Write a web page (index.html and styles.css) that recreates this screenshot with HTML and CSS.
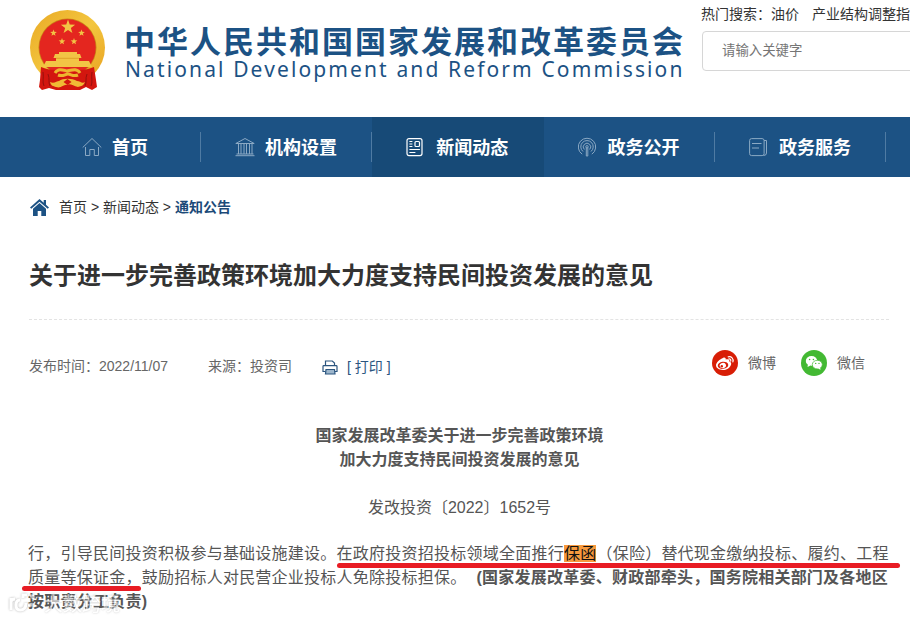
FILE: index.html
```html
<!DOCTYPE html>
<html lang="zh-CN">

<head>
  <meta charset="UTF-8">
  <title>关于进一步完善政策环境加大力度支持民间投资发展的意见</title>
  <link rel="stylesheet" href="styles.css">
</head>

<body>
  <div class="page">
    <header class="header">
      <svg class="emblem" viewBox="0 0 76 82">
        <defs>
          <linearGradient id="gold" x1="0" y1="0" x2="1" y2="1">
            <stop offset="0" stop-color="#e9a925"/>
            <stop offset=".5" stop-color="#f3c63f"/>
            <stop offset="1" stop-color="#e8a01f"/>
          </linearGradient>
          <path id="star" d="M0-1 .235-.323.951-.309.38.124.588.809 0 .4-.588.809-.38.124-.951-.309-.235-.323z"/>
        </defs>
        <circle cx="37.500" cy="37.500" r="37.500" fill="url(#gold)"/>
        <circle cx="37.500" cy="37.500" r="29" fill="#c98417"/>
        <circle cx="37.500" cy="37.500" r="28.200" fill="#e4261f"/>
        <g fill="#f2c545">
          <use href="#star" transform="translate(38 17) scale(7.500)"/>
          <use href="#star" transform="translate(23.500 23) scale(3.500)"/>
          <use href="#star" transform="translate(51.500 23) scale(3.500)"/>
          <use href="#star" transform="translate(32 31.500) scale(3.500)"/>
          <use href="#star" transform="translate(44 31.500) scale(3.500)"/>
          <path d="M29 42h18v2h3l1.500 4H49v3h10l3 6H13l3-6h10v-3h-2.500l1.500-4h4z"/>
        </g>
        <path d="M26 48.300h23" stroke="#d8951d" stroke-width=".7"/>
        <path d="M11 57c5 2 9 3 15 3l11.500 4L49 60c6 0 10-1 15-3l2 13 1 7-5 3-6-3-6 3H26l-7-2-7 2-3-3 1-7z" fill="#d3160f"/>
        <path d="M13 62c1 6-1 10 1 14M18 64c2 5 0 8 2 12M57 64c-2 5 0 8-2 12M62 62c-1 6 1 10-1 14" fill="none" stroke="#96100c"/>
        <path d="M25 63c3-5 8-3 12-2 5-1 10-3 13 2M28 65c5 2 7-1 10-1s5 3 10 1" fill="none" stroke="#edb52e" stroke-width="3"/>
        <path d="M20 72c4 2 7-1 9-1 4-3 13-3 18 0 3 0 5 3 8 1-2 5-5 4-7 5-5-1-8-4-11-2-3-1-6 4-11 2-3-1-5-1-6-5z" fill="#f0ba35"/>
        <path d="m37.500 69 4 3-4 3-4-3z" fill="#d3160f"/>
      </svg>
      <div class="site-name">
        <div class="name-cn">中华人民共和国国家发展和改革委员会</div>
        <div class="name-en">National Development and Reform Commission</div>
      </div>
      <div class="search">
        <div class="hot"><span>热门搜索：油价</span><span>产业结构调整指</span></div>
        <div class="search-box">请输入关键字</div>
      </div>
    </header>

    <nav class="nav">
      <a class="nav-item first">
        <svg class="nav-icon" viewBox="0 0 20 20"><path d="M.7 10.500 10 1.500l9.300 9M3.500 10v8.500h4.300v-6h4.500v6h4.200V10"/></svg>
        <span>首页</span>
      </a>
      <a class="nav-item">
        <svg class="nav-icon" viewBox="0 0 20 20"><path d="M.8 6.500 10 1.500l9.200 5zM3.500 6.500v10.500M6 6.500v10.500M9 6.500v10.500M11.500 6.500v10.500M14.500 6.500v10.500M17 6.500v10.500M1.500 17h17M.5 18.700h19"/></svg>
        <span>机构设置</span>
      </a>
      <a class="nav-item active">
        <svg class="nav-icon" viewBox="0 0 20 20"><rect x="1" y="1.600" width="15" height="17" rx="2"/><rect x="9" y="4.500" width="4.500" height="5" rx="1"/><path d="M3.400 4.500h3M3.400 7h3M3.400 9.500h3M3.400 12.500h10.500M3.400 15.500h6"/></svg>
        <span>新闻动态</span>
      </a>
      <a class="nav-item">
        <svg class="nav-icon" viewBox="0 0 20 20"><path d="M4.200 17.200A8.700 8.700 0 1 1 13.800 17.200M5 14.500A6.200 6.200 0 1 1 13 14.500M6.300 12.500A3.700 3.700 0 1 1 11.700 12.500M8.300 10.500v8.500h1.500v-8.500"/><circle cx="9" cy="9.800" r="1.200"/></svg>
        <span>政务公开</span>
      </a>
      <a class="nav-item">
        <svg class="nav-icon" viewBox="0 0 20 20"><rect x=".6" y="1.600" width="14.500" height="17" rx="2"/><path d="M15 3.500h2.500v12.500q0 2.500-3 2.500M3 6.500h9.500M3 11h7"/></svg>
        <span>政务服务</span>
      </a>
    </nav>

    <div class="crumbs">
      <svg class="home" viewBox="0 0 19 17"><path d="M9.500 0 0 8.500l1.300 1.300L9.500 2.700l8.200 7.100L19 8.500l-3-2.700V1h-2.300v2.700z"/><path d="M9.500 4 3 9.700V17h4.700v-5h3.600v5H16V9.700z"/></svg>
      <span>首页 &gt; 新闻动态 &gt; <b>通知公告</b></span>
    </div>

    <h1 class="title">关于进一步完善政策环境加大力度支持民间投资发展的意见</h1>

    <div class="meta">
      <span class="date">发布时间：2022/11/07</span>
      <span class="source">来源：投资司</span>
      <span class="print">
        <svg viewBox="0 0 16 15"><path d="M3.500 6V1h6.800L12.500 3v3M3.500 11.500H1V6.500q0-.8.800-.8h12.400q.8 0 .8.800v5H12.500"/><path class="tray" d="M4 9.500h8.500l.5 4.500H3.500z"/></svg>
        <span>[ 打印 ]</span>
      </span>
      <span class="share">
        <svg viewBox="0 0 26 26">
          <circle cx="13" cy="13" r="13" fill="#d81e06"/>
          <path d="M11 8c1.700-1 3 0 2.700 1.600 2.300-.8 4.200-.2 3.600 1.800 1.700.5 2.300 1.700 1.700 3.300-1.200 3.300-4.500 5.300-8 5.300-4 0-7-2-7-4.700C4 12.600 8 9 11 8z" fill="#fff"/>
          <ellipse cx="11" cy="15.300" rx="5.300" ry="3.600" fill="#d81e06" transform="rotate(-7 11 15.300)"/>
          <ellipse cx="10.800" cy="15.500" rx="3.200" ry="2.700" fill="#fff" transform="rotate(-20 10.800 15.500)"/>
          <circle cx="9.800" cy="16.200" r="1.200" fill="#d81e06"/>
          <path d="M16.200 6.800c3.200-.8 5.600 1.800 4.700 5M16.700 9c1.500-.3 2.400.8 2 2.200" fill="none" stroke="#fff" stroke-width="1.200" stroke-linecap="round"/>
        </svg>
        <span>微博</span>
      </span>
      <span class="share">
        <svg viewBox="0 0 26 26">
          <circle cx="13" cy="13" r="13" fill="#43b933"/>
          <ellipse cx="10.500" cy="10.900" rx="5.700" ry="4.900" fill="#fff"/>
          <path d="m7 14-.5 3 3-1.500z" fill="#fff"/>
          <ellipse cx="16.300" cy="14.600" rx="5" ry="4.300" fill="#fff" stroke="#43b933" stroke-width=".7"/>
          <path d="m17 18.500 2.500 1.300-.4-2.500z" fill="#fff"/>
          <g fill="#43b933"><circle cx="8.600" cy="9.500" r=".8"/><circle cx="12.400" cy="9.500" r=".8"/><circle cx="14.700" cy="13.400" r=".7"/><circle cx="18" cy="13.400" r=".7"/></g>
        </svg>
        <span>微信</span>
      </span>
    </div>

    <article class="article">
      <h2 class="doc-title">国家发展改革委关于进一步完善政策环境<br>加大力度支持民间投资发展的意见</h2>
      <p class="doc-no">发改投资〔2022〕1652号</p>
      <div class="body-text">
        <p class="line">行，引导民间投资积极参与基础设施建设。<span class="marked">在政府投资招投标领域全面推行<em>保函</em>（保险）替代现金缴纳投标、履约、工程</span></p>
        <p class="line"><span class="marked short">质量等保证金，</span>鼓励招标人对民营企业投标人免除投标担保。<b class="duty">(国家发展改革委、财政部牵头，国务院相关部门及各地区</b></p>
        <p class="line"><b>按职责分工负责)</b></p>
        <div class="watermark">
          <svg viewBox="0 0 28 24"><path d="M3 5v12M3 9q0-3 4-3M12 7q-4 0-4 5t4 5q6 0 6-7M15 5V2h4M22 3h3v3M23 10v2h-3"/></svg>
          <span>大数跨境</span>
        </div>
      </div>
    </article>
  </div>
</body>

</html>
```
FILE: styles.css
```css
* {
  box-sizing: border-box;
}

body {
  margin: 0;
  background: #fff;
  color: #333;
  font-family: "Liberation Sans", "Noto Sans CJK SC", sans-serif;
  font-size: 14px;
}

h1, h2, p {
  margin: 0;
}

.page {
  width: 910px;
  height: 622px;
  overflow: hidden;
}

/* header */
.header {
  display: flex;
  height: 117px;
  padding-left: 30px;
}

.emblem {
  width: 76px;
  height: 82px;
  margin-top: 10px;
  flex: none;
}

.site-name {
  width: 577px;
  margin-left: 18px;
  padding-top: 21px;
  flex: none;
  color: #1c5284;
  white-space: nowrap;
}

.name-cn {
  font-family: "Noto Sans CJK SC", sans-serif;
  font-size: 31px;
  font-weight: 700;
  line-height: 38px;
  letter-spacing: 2px;
}

.name-en {
  padding-left: 1px;
  font-family: "Noto Sans", sans-serif;
  font-size: 21px;
  line-height: 20px;
  letter-spacing: 2.12px;
}

.search {
  flex: 1;
  min-width: 0;
  overflow: hidden;
}

.hot {
  display: flex;
  gap: 13px;
  height: 31px;
  line-height: 29px;
  white-space: nowrap;
}

.search-box {
  width: 260px;
  height: 40px;
  margin-left: 1px;
  padding-left: 19px;
  border: 1px solid #d6d6d6;
  border-radius: 4px;
  color: #757575;
  font-size: 13.4px;
  line-height: 37px;
}

/* main menu */
.nav {
  display: flex;
  height: 60px;
  padding-left: 29px;
  background: #1c5284;
}

.nav-item {
  display: flex;
  align-items: center;
  gap: 10px;
  width: 171.3px;
  padding-left: 34px;
  background: linear-gradient(#4f7ba3, #4f7ba3) right center / 1px 30px no-repeat;
  color: #fff;
  font-size: 18px;
  font-weight: 700;
}

.nav-item.first {
  width: 172px;
  padding-left: 53px;
}

.nav-item.active {
  background: #174a77;
}

.nav-item span {
  padding-bottom: 2px;
}

.nav-icon {
  width: 20px;
  height: 20px;
  fill: none;
  stroke: #8ba9c4;
  stroke-width: 1;
}

.active .nav-icon {
  stroke: #fff;
  stroke-width: 1.2;
}

/* breadcrumb */
.crumbs {
  display: flex;
  align-items: center;
  gap: 10px;
  height: 60px;
  padding-left: 30px;
}

.crumbs span {
  padding-bottom: 2px;
}

.crumbs b {
  color: #1c4a78;
}

.home {
  width: 19px;
  height: 17px;
  fill: #1c5284;
}

.title {
  height: 83px;
  margin: 0 21px 0 29px;
  padding-top: 21px;
  border-bottom: 1px dashed #e3e3e3;
  font-size: 24px;
  line-height: 36px;
  white-space: nowrap;
}

.meta {
  display: flex;
  align-items: center;
  height: 90px;
  padding-left: 29px;
  color: #666;
}

.date {
  width: 179px;
}

.source {
  width: 114px;
}

.print {
  display: flex;
  align-items: center;
  gap: 9px;
  width: 390px;
  padding-top: 5px;
  color: #2b557f;
}

.print span {
  padding-bottom: 3px;
}

.print svg {
  width: 16px;
  height: 15px;
  fill: none;
  stroke: #2b557f;
  stroke-width: 1.2;
}

.print .tray {
  fill: #9db6cc;
}

.share {
  display: flex;
  align-items: center;
  gap: 10px;
  width: 89px;
  margin-top: -5px;
}

.share span {
  padding-bottom: 2px;
}

.share svg {
  width: 26px;
  height: 26px;
}

/* article */
.article {
  padding: 14px 0 0 28px;
  color: #555;
  font-size: 16px;
  line-height: 24px;
}

.doc-title {
  width: 863px;
  font-size: 16px;
  text-align: center;
}

.doc-no {
  width: 863px;
  margin: 24px 0 22px;
  text-align: center;
}

.body-text {
  position: relative;
}

.line {
  height: 24px;
  letter-spacing: .24px;
  white-space: nowrap;
}

.line em {
  background: #f79a3e;
  color: #111;
  font-style: normal;
}

.duty {
  margin-left: 10px;
}

/* red marker strokes lie over the text */
.marked {
  position: relative;
}

.marked::after {
  content: "";
  position: absolute;
  left: 0;
  top: 18px;
  width: 563px;
  height: 5px;
  border-radius: 3px;
  background: #e81c24;
}

.marked.short::after {
  left: -6px;
  top: 17px;
  width: 119px;
}

.watermark {
  position: absolute;
  left: -20px;
  top: 51px;
  display: flex;
  align-items: center;
  gap: 8px;
  color: #fff;
  font-size: 19px;
  font-weight: 500;
  text-shadow: 0 0 2px #999;
  opacity: .6;
}

.watermark svg {
  width: 28px;
  height: 24px;
  fill: none;
  stroke: #fff;
  stroke-width: 3;
  filter: drop-shadow(0 0 1px #888);
}
```
